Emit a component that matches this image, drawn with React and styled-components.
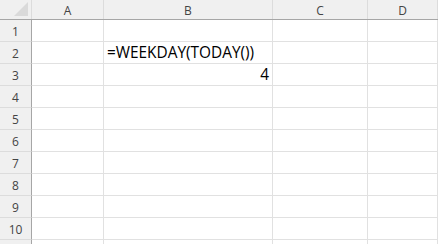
import React from 'react';
import styled, { createGlobalStyle } from 'styled-components';

const GlobalStyle = createGlobalStyle`
  html, body {
    margin: 0;
    padding: 0;
    background: #ffffff;
    overflow: hidden;
  }
`;

// row header, A, B, C, D
const COLS = '32px 72px 169px 95px 1fr';

const Sheet = styled.div`
  width: 438px;
  height: 244px;
  overflow: hidden;
  font-family: "Open Sans", "Noto Sans", Arial, sans-serif;
`;

const HeaderRow = styled.div`
  display: grid;
  grid-template-columns: ${COLS};
  height: 20px;
  background: #f0f0f0;
  border-bottom: 1px solid #a6a6a6;
  box-sizing: border-box;
`;

// top-left select-all corner with its little triangle
const Corner = styled.div`
  position: relative;
  border-right: 1px solid #dcdcdc;
  &::after {
    content: '';
    position: absolute;
    right: 3px;
    bottom: 3px;
    width: 0;
    height: 0;
    border-left: 14px solid transparent;
    border-bottom: 14px solid #dadada;
  }
`;

const ColHead = styled.div`
  display: flex;
  align-items: center;
  justify-content: center;
  border-right: 1px solid #dcdcdc;
  font-size: 12px;
  color: #444444;
  padding-top: 1px;
`;

const Row = styled.div`
  display: grid;
  grid-template-columns: ${COLS};
  height: 22px;
`;

const RowHead = styled.div`
  display: flex;
  align-items: center;
  justify-content: center;
  background: #f0f0f0;
  border-right: 1px solid #a6a6a6;
  border-bottom: 1px solid #dcdcdc;
  font-size: 12px;
  color: #444444;
  padding-top: 1px;
`;

const Cell = styled.div`
  border-right: 1px solid #e1e1e1;
  border-bottom: 1px solid #e1e1e1;
  display: flex;
  align-items: center;
  justify-content: ${p => (p.$right ? 'flex-end' : 'flex-start')};
  padding: 0 3px;
  font-size: 15.4px;
  color: #000000;
  white-space: nowrap;
`;

const cells = {
  2: { 1: { text: '=WEEKDAY(TODAY())' } },
  3: { 1: { text: '4', right: true } },
};

const App = () => {
  const rows = Array.from({ length: 10 }, (_, i) => i + 1);
  return (
    <Sheet>
      <GlobalStyle />
      <HeaderRow>
        <Corner />
        {['A', 'B', 'C', 'D'].map(c => (
          <ColHead key={c}>{c}</ColHead>
        ))}
      </HeaderRow>
      {rows.map(r => (
        <Row key={r}>
          <RowHead>{r}</RowHead>
          {[0, 1, 2, 3].map(c => {
            const cell = cells[r] && cells[r][c];
            return (
              <Cell key={c} $right={cell && cell.right}>
                {cell ? cell.text : ''}
              </Cell>
            );
          })}
        </Row>
      ))}
      {/* partly visible row below 10 */}
      <Row>
        <RowHead />
        {[0, 1, 2, 3].map(c => (
          <Cell key={c} />
        ))}
      </Row>
    </Sheet>
  );
};

export default App;
